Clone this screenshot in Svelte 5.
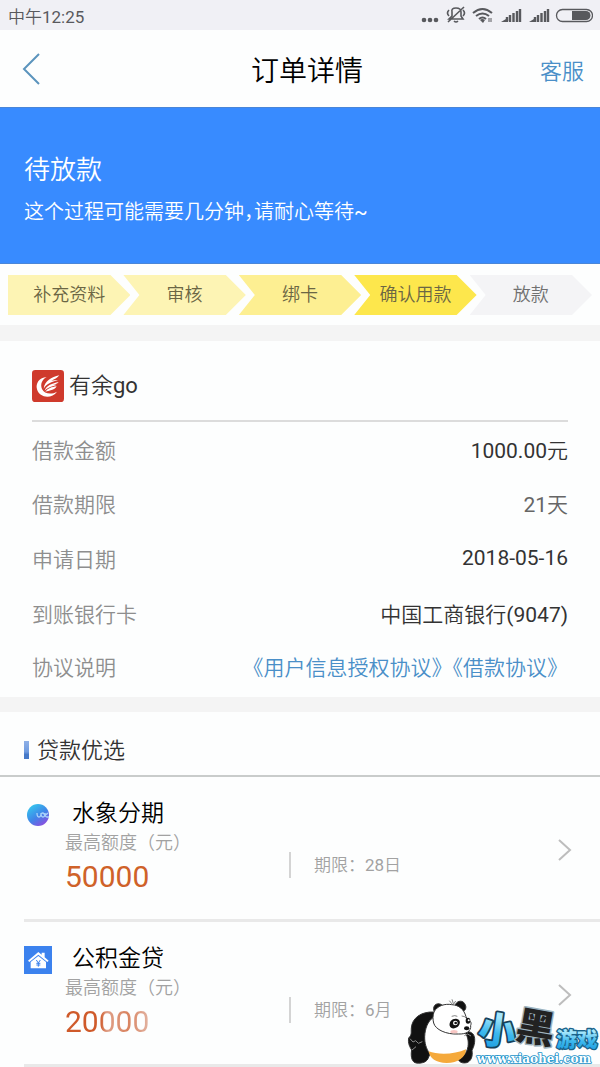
<style>
  :global(body) {
    margin: 0;
    background: #fdfefe;
  }

  .page {
    position: relative;
    overflow: hidden;

    font-family: Roboto, 'Noto Sans CJK SC DemiLight', 'Noto Sans CJK SC', sans-serif;
    font-weight: 400;
    color: #333;
  }

  h1,
  h2,
  h3,
  p,
  dl,
  dd,
  ul,
  ol {
    margin: 0;
    padding: 0;
    font-weight: inherit;
    list-style: none;
  }

  a {
    color: #4a8fc8;
    text-decoration: none;
  }

  .status {
    display: flex;
    align-items: center;
    justify-content: space-between;
    height: 30px;
    padding: 0 7px 0 8px;

    font-size: 17px;
    color: #58595d;
    background: #f0f0f5;
  }

  .status svg {
    display: block;
  }

  header {
    display: grid;
    grid-template-columns: 1fr auto 1fr;
    align-items: center;
    height: 77px;
    padding: 0 16px 0 20px;
  }

  header button {
    display: flex;
    justify-self: start;
    padding: 0;
    border: none;
    background: none;
  }

  h1 {
    padding-left: 10px;
    font-size: 28px;
    color: #000;
  }

  header a {
    justify-self: end;
    font-size: 22px;
  }

  .banner {
    box-sizing: border-box;
    height: 157px;
    padding: 42px 24px 0;

    color: #fff;
    background: #388bff;
    border-top: 1px solid #4a86d8;
    border-bottom: 1px solid #4a86d8;
  }

  .banner h2 {
    font-size: 26px;
    line-height: 40px;
  }

  .banner p {
    font-size: 20px;
    line-height: 44px;
    font-feature-settings: 'halt';
  }

  .steps {
    display: flex;
    padding: 11px 8px 10px;
  }

  .steps li {
    flex: 1;
    margin-left: -7px;

    font-size: 18px;
    line-height: 40px;
    text-align: center;
    color: #6b6644;
    clip-path: polygon(0 0, calc(100% - 20px) 0, 100% 50%, calc(100% - 20px) 100%, 0 100%, 16px 50%);
  }

  .steps li:first-child {
    margin-left: 0;
    clip-path: polygon(0 0, calc(100% - 20px) 0, 100% 50%, calc(100% - 20px) 100%, 0 100%);
  }

  .steps .past {
    background: #fdf4b4;
  }

  .steps .recent {
    background: #fdef92;
  }

  .steps .current {
    background: #fde74c;
  }

  .steps .next {
    color: #707070;
    background: #f4f4f6;
  }

  .order {
    padding: 0 32px 6px;
    border-top: 16px solid #f4f4f4;
    border-bottom: 15px solid #f4f4f4;
  }

  .lender {
    display: flex;
    align-items: center;
    gap: 5px;
    height: 79px;
    border-bottom: 2px solid #dcdcdc;
  }

  .lender svg {
    margin-top: 11px;
  }

  .lender h2 {
    padding-top: 4px;
    font-size: 22px;
  }

  .row {
    display: flex;
    align-items: center;
    justify-content: space-between;
    height: 55px;
    font-size: 21px;
  }

  .row:first-child {
    height: 53px;
  }

  .row:last-child {
    height: 51px;
  }

  .row dt {
    color: #8e8e8e;
  }

  .row dd.light {
    color: #666;
  }

  .picks h2 {
    display: flex;
    align-items: center;
    gap: 8px;
    height: 63px;
    padding: 0 24px;

    font-size: 22px;
    border-bottom: 2px solid #c9cccb;
  }

  .picks h2::before {
    content: '';
    width: 5px;
    height: 18px;
    margin-top: 12px;
    background: linear-gradient(#8fb0e6, #6f9be0 60%, #4679c8 75%);
  }

  .picks h2 span {
    padding-top: 8px;
  }

  .loan {
    display: grid;
    grid-template-columns: 41px 224px 1fr auto;
    box-sizing: border-box;
    height: 145px;
    margin-left: 24px;
    padding: 20px 28px 0 0;

    color: inherit;
    border-bottom: 3px solid #e9e9e9;
  }

  .loan .mark {
    margin-top: 4px;
  }

  .loan h3 {
    padding-left: 7px;
    font-size: 23px;
    line-height: 34px;
    color: #000;
  }

  .loan .note {
    font-size: 18px;
    line-height: 24px;
    color: #a2a2a2;
  }

  .loan .amount {
    width: 84px;
    font-size: 30px;
    line-height: 44px;
    color: #cf6229;
  }

  .loan .faded {
    color: transparent;
    background: linear-gradient(90deg, #cf5a2a 42%, #dfa088 50%, #d9835f 75%, #e2b3a2);
    background-clip: text;
  }

  .loan .term {
    align-self: start;
    margin-top: 55px;
    padding-left: 23px;

    font-size: 17px;
    line-height: 26px;
    color: #a2a2a2;
    border-left: 2px solid #d4d4d4;
  }

  .loan .arrow {
    margin-top: 41px;
  }

  .sponsor {
    position: absolute;
    right: 0;
    bottom: 0;
  }

  .sponsor text {
    font-weight: 900;
    stroke-linejoin: round;
    paint-order: stroke;
  }

  .sponsor .name {
    font-family: 'Noto Sans CJK SC', sans-serif;
  }

  .sponsor .site {
    font-family: 'DejaVu Serif', serif;
    font-weight: 700;
  }
</style>

<div class="page">
  <div class="status">
    <span>中午12:25</span>
    <svg width="172" height="30" viewBox="0 0 172 30" fill="none" stroke="#58595d">
      <g fill="#58595d" stroke="none">
        <circle cx="3" cy="20" r="2.3" />
        <circle cx="9" cy="20" r="2.3" />
        <circle cx="15" cy="20" r="2.3" />
      </g>
      <path
        d="M28 19h14l-2-3v-4q0-4-5-4t-4 4v4zM33 21q2 2 4 0M43 7 27 22M28 10q-3 3 0 6M42 10q3 3 0 6"
        stroke-width="1.6" />
      <path d="M52 13q9.500-8 19 0M55 16q6.500-5 13 0M58 19q3.500-3 7 0" stroke-width="2" />
      <path d="m59 20 3 3 2-3q-3-2-5 0z" fill="#58595d" stroke="none" />
      <path d="M68 18v4m2 0v-4" stroke-width="1" />
      {#each [78, 106] as x}
        <path
          d="M{x + 8} 22v-5M{x + 11} 22v-7M{x + 14.500} 22v-9M{x + 18} 22V11M{x + 21} 22V9"
          stroke-width="2.4" />
        <path d="M{x + 2} 22l5-3v3z" fill="#58595d" stroke="none" />
      {/each}
      <rect x="135.5" y="9.5" width="36" height="12" rx="6" stroke-width="1.3" />
      <path d="M151 11h14a4.500 4.500 0 0 1 0 9h-14z" fill="#58595d" stroke="none" />
    </svg>
  </div>

  <header>
    <button aria-label="返回">
      <svg width="22" height="32" viewBox="0 0 22 32" fill="none" stroke="#5b94bd" stroke-width="2">
        <path d="M19 1 4 16l15 15" />
      </svg>
    </button>
    <h1>订单详情</h1>
    <a href="#service">客服</a>
  </header>

  <section class="banner">
    <h2>待放款</h2>
    <p>这个过程可能需要几分钟，请耐心等待~</p>
  </section>

  <ol class="steps">
    {#each steps as step}
      <li class={step.state}>{step.name}</li>
    {/each}
  </ol>

  <section class="order">
    <div class="lender">
      <svg width="32" height="32" viewBox="0 0 96 96">
        <rect width="96" height="96" rx="10" fill="#cf3a2c" />
        <path
          d="M44 21C22 22 10 40 15 58c7 26 44 30 60 7-15 9-38 8-45-8-6-14 0-28 14-36z"
          fill="#fff" />
        <path
          d="M82 16C58 22 38 32 35 56c8-15 24-20 43-26-8 0-14 1-20 3 9-6 18-8 24-17zM80 36c-19 4-37 10-42 26 10-11 22-12 36-17-6-1-10 0-14 1 8-3 16-4 20-10zM74 49c-14 2-28 6-34 17 11-5 27-4 34-17z"
          fill="#fff" />
      </svg>
      <h2>有余go</h2>
    </div>
    <dl>
      {#each details as row}
        <div class="row">
          <dt>{row.label}</dt>
          <dd class:light={row.light}>{row.value}</dd>
        </div>
      {/each}
      <div class="row">
        <dt>协议说明</dt>
        <dd><a href="#auth">《用户信息授权协议》</a><a href="#loan">《借款协议》</a></dd>
      </div>
    </dl>
  </section>

  <section class="picks">
    <h2><span>贷款优选</span></h2>
    <ul>
      {#each loans as loan}
        <li>
          <a class="loan" href="#{loan.id}">
            {#if loan.id === 'shuixiang'}
              <svg class="mark" width="28" height="28" viewBox="0 0 28 28">
                <defs>
                  <linearGradient id="drop" x1="0" y1="0" x2="0.7" y2="1">
                    <stop offset="0.1" stop-color="#35c8ee" />
                    <stop offset="0.6" stop-color="#3f86e8" />
                    <stop offset="1" stop-color="#8a4fe0" />
                  </linearGradient>
                </defs>
                <circle cx="14" cy="14" r="11" fill="url(#drop)" />
                <path
                  d="M13 12q0 4 2 4t2-4q0 4 2 4t2-4q0 4 2 4h2M17 13q2-2 3 0t4-1"
                  fill="none"
                  stroke="#a9d2fa"
                  stroke-width="1.3" />
              </svg>
            {:else}
              <svg class="mark" width="28" height="28" viewBox="0 0 84 84">
                <rect width="84" height="84" fill="#3c82ee" />
                <path d="M12 44 43 18l10 8v-6h9v14l12 10-4 4-27-22-27 22z" fill="#fff" />
                <path d="m20 48 23-18 23 18v19H20z" fill="#fff" />
                <path d="m37 42 6 9 6-9M43 51v11M37 52h12M37 57h12" fill="none" stroke="#3c82ee" stroke-width="3" />
              </svg>
            {/if}
            <div>
              <h3>{loan.name}</h3>
              <p class="note">最高额度（元）</p>
              <p class="amount" class:faded={loan.faded}>{loan.amount}</p>
            </div>
            <span class="term">期限：{loan.term}</span>
            <svg class="arrow" width="16" height="24" viewBox="0 0 16 24" fill="none" stroke="#bdbdbd" stroke-width="2">
              <path d="m3 2 11 10L3 22" />
            </svg>
          </a>
        </li>
      {/each}
    </ul>
  </section>

  <svg class="sponsor" width="200" height="77" viewBox="0 0 600 231">
    <defs>
      <linearGradient id="sky" x1="0" y1="0" x2="0" y2="1">
        <stop offset="0.3" stop-color="#a5e6fb" />
        <stop offset="0.6" stop-color="#3db8ee" />
        <stop offset="1" stop-color="#1597dc" />
      </linearGradient>
    </defs>
    <g stroke="#333" stroke-width="3">
      <path
        d="M102 66C62 64 36 85 34 114c-1 14 2 20-8 30-3 16 4 28 9 36-3 16-1 33 10 38 14 4 34 0 39-12l26-62z"
        fill="#111" />
      <path
        d="M192 128c18-8 31 2 32 18 1 18-5 28-8 36 3 17-3 32-16 36-18 4-28-6-26-20z"
        fill="#111" />
      <path
        d="M100 82c-17 12-25 34-26 58-1 36 20 74 62 74 36 0 64-16 68-44 3-20-3-34-10-44z"
        fill="#fff" />
      <path d="M86 184c26 11 79 10 112-6 0 24-24 41-58 41-32 0-51-14-54-35z" fill="#f5a93b" stroke="none" />
      <path d="M102 63c-6-20 14-29 28-15zM166 47c0-12 20-20 28-6 8 12 1 22-7 24z" fill="#111" />
      <path
        d="M102 66c9-19 34-26 53-22 22 1 37 14 43 36l5 10c10 2 12 10 9 16 2 18-13 27-37 26-36 2-69-13-74-33-3-12-3-22 1-33z"
        fill="#fff" />
    </g>
    <path d="m148 32 9 11m-1-15 4 13m7-8-6 9M155 79q10-4 17 0M185 78q9 0 13 6" fill="none" stroke="#444" stroke-width="2" />
    <path d="M149 107c-2-12 9-23 22-20 13 3 10 19 0 25-8 5-19 5-22-5z" fill="#111" />
    <ellipse cx="204" cy="92" rx="7" ry="9" fill="#111" />
    <ellipse cx="200" cy="115" rx="8" ry="6" fill="#111" />
    <circle cx="166" cy="99" r="7" fill="#fff" />
    <circle cx="167" cy="99" r="4" fill="#111" />
    <circle cx="206" cy="91" r="3" fill="#fff" />
    <ellipse cx="162" cy="125" rx="11" ry="5" fill="#f8c6c3" />
    <path d="m30 146 9 10 8-4 8 8 12-5M36 180l12-10M193 137l10-5 10 6" fill="none" stroke="#888" stroke-width="3" />
    <g class="name">
      <text x="236" y="162" font-size="112" fill="url(#sky)" stroke="#17415a" stroke-width="11" transform="rotate(8 290 120)">小</text>
      <text x="350" y="155" font-size="116" fill="#222" stroke="#9fb4bf" stroke-width="9" transform="rotate(10 408 110)">黑</text>
      <text x="469" y="172" font-size="62" fill="url(#sky)" stroke="#1b6289" stroke-width="8">游戏</text>
    </g>
    <text class="site" x="230" y="218" font-size="36" fill="#fff" stroke="#1791c9" stroke-width="5">www.xiaohei.com</text>
  </svg>
</div>

<script>
  const steps = [
    { name: '补充资料', state: 'past' },
    { name: '审核', state: 'past' },
    { name: '绑卡', state: 'recent' },
    { name: '确认用款', state: 'current' },
    { name: '放款', state: 'next' },
  ];

  const details = [
    { label: '借款金额', value: '1000.00元' },
    { label: '借款期限', value: '21天', light: true },
    { label: '申请日期', value: '2018-05-16' },
    { label: '到账银行卡', value: '中国工商银行(9047)' },
  ];

  const loans = [
    { id: 'shuixiang', name: '水象分期', amount: '50000', term: '28日' },
    { id: 'gongjijin', name: '公积金贷', amount: '20000', term: '6月', faded: true },
  ];
</script>
